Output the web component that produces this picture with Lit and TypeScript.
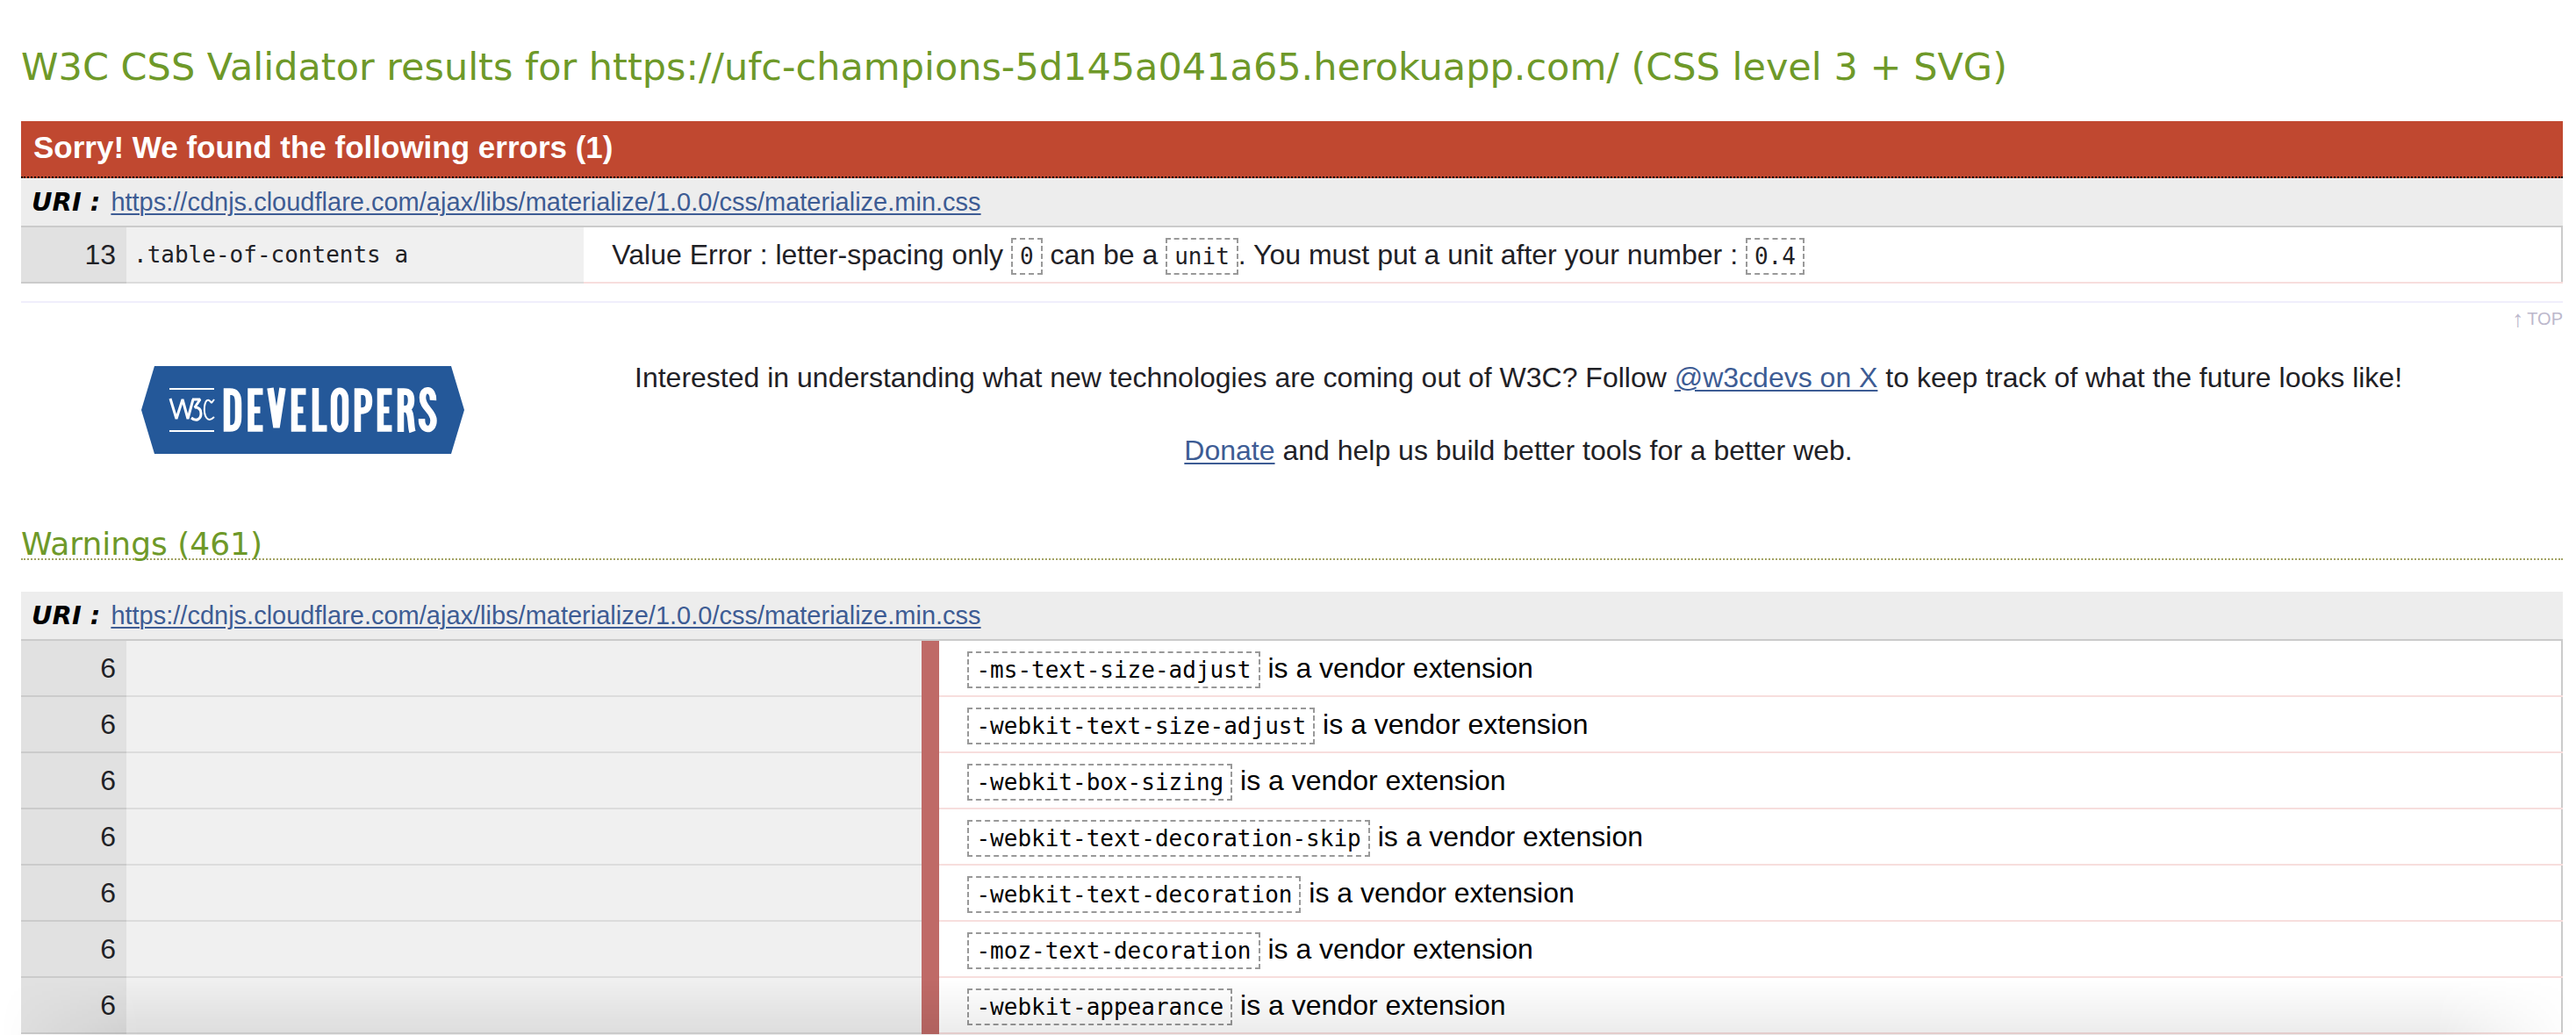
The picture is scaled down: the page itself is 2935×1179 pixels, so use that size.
import { LitElement, html, css } from "lit";
import { customElement } from "lit/decorators.js";

const SHEET = "https://cdnjs.cloudflare.com/ajax/libs/materialize/1.0.0/css/materialize.min.css";

const WARNINGS = [
  "-ms-text-size-adjust",
  "-webkit-text-size-adjust",
  "-webkit-box-sizing",
  "-webkit-text-decoration-skip",
  "-webkit-text-decoration",
  "-moz-text-decoration",
  "-webkit-appearance",
];

@customElement("w3c-developers-logo")
class W3cDevelopersLogo extends LitElement {
  static styles = css`
    :host { display: block; }
    .logo { display: block; width: 368px; height: 100px; }
  `;
  render() {
    return html`
      <svg class="logo" viewBox="0 0 368 100" role="img" aria-label="W3C Developers">
        <path d="M15 0H353L368 50L353 100H15L0 50Z" fill="#245899" />
        <path d="M32 26H83M32 74H83" stroke="#fff" stroke-width="2" />
        <g fill="none" stroke="#fff" stroke-width="3" stroke-linejoin="bevel">
          <path d="M33 37L40 60L47 38L53 60L59 38" stroke-width="3" />
          <path d="M58 38H67L61 47C67 47 68 51 68 54C68 60 63 64 57 59" />
          <path d="M83 38L80 42C76 36 73 39 72 46C71 56 75 66 83 58" stroke-width="2" />
        </g>
        <g fill="none" stroke="#fff" stroke-width="7.5">
          <path d="M97.500 29H101C108 29 110.500 33 110.500 42V58C110.500 67 108 71 101 71H97.500Z" />
          <path d="M138.500 29H125V71H138.500M125 50H135.500" />
          <path d="M147 25L154 70L161 25" />
          <path d="M187.500 29H174.500V71H187.500M174.500 50H184.500" />
          <path d="M198.500 25V71H211.500" />
          <path d="M219.500 38C219.500 25 232.500 25 232.500 38V62C232.500 75 219.500 75 219.500 62Z" />
          <path d="M246.500 75V29H250C258 29 259.500 33 259.500 40C259.500 48 257 51 250 51H246.500" />
          <path d="M285.500 29H272.500V71H285.500M272.500 50H282.500" />
          <path d="M295.500 75V29H299C306 29 307.500 33 307.500 39C307.500 46 305 49 299 49H295.500M301 49C309 50 306 66 309 75" />
          <path d="M332.500 39C333 25 320.500 24 320.500 36C320.500 48 333 51 333 62C333 75 319 75 319.500 60" />
        </g>
      </svg>
    `;
  }
}

@customElement("app-root")
class AppRoot extends LitElement {
  static styles = css`
    :host {
      display: block;
      height: 100vh;
      overflow: hidden;
      background: #fff;
      color: #1f2126;
      font-family: "Liberation Sans", Arial, sans-serif;
      font-size: 32px;
      line-height: 48px;
    }
    * { box-sizing: border-box; }
    .page { padding: 48px 15px 0 24px; }
    h2, h3, h4, p { margin: 0; }
    a { color: #3d5c94; text-underline-offset: 3px; text-decoration-thickness: 2px; }
    .title {
      margin-bottom: 34px;
      color: #6e9929;
      font: 43px/56px "DejaVu Sans", Verdana, sans-serif;
    }
    .banner {
      height: 65px;
      padding: 0 14px;
      border-bottom: 2px dotted #000;
      background: #c04830;
      color: #fff;
      font-size: 35px;
      font-weight: 700;
      line-height: 60px;
    }
    .uri {
      display: flex;
      align-items: center;
      gap: 12px;
      height: 54px;
      padding: 0 12px;
      background: #ededed;
      font-size: 29px;
      font-weight: 400;
    }
    .uri-label { color: #000; font: italic 700 29px/48px "DejaVu Sans", Verdana, sans-serif; }
    table {
      width: 100%;
      border-spacing: 0;
      border-top: 2px solid #cbcbcb;
      table-layout: fixed;
    }
    td {
      height: 64px;
      padding: 0;
      border-bottom: 2px solid #f7dedd;
      vertical-align: middle;
      white-space: nowrap;
    }
    .line { width: 120px; padding-right: 12px; border-color: #cbcbcb; background: #e1e1e1; text-align: right; }
    .context { border-color: #dcdcdc; background: #f0f0f0; font: 26px/32px "DejaVu Sans Mono", monospace; padding-left: 8px; }
    .errors .context { width: 18%; }
    .errors .message { padding-left: 32px; }
    .warnings .context { width: 31.3%; }
    .bar { width: 20px; background: #bf6a67; border-color: #bf6a67; }
    .warnings .message { padding-left: 32px; color: #000; }
    .message-edge { width: 2px; background: #cbcbcb; }
    code {
      display: inline-block;
      padding: 0 8px;
      border: 2px dashed #999;
      color: #000;
      font: 26px/38px "DejaVu Sans Mono", monospace;
    }
    .errors code { color: #1f2126; }
    .top {
      margin-top: 20px;
      padding-top: 6px;
      border-top: 2px solid #f0eefc;
      font-size: 20px;
      line-height: 24px;
      text-align: right;
    }
    .top a {
      display: flex;
      justify-content: flex-end;
      align-items: center;
      gap: 4px;
      color: #bcb8cc;
      text-decoration: none;
    }
    .arrow { font-size: 26px; }
    .promo { display: flex; align-items: flex-start; padding-top: 31px; }
    .promo-logo { width: 23%; padding: 11px 0 0 137px; flex: none; }
    .promo-text { flex: 1; padding-right: 150px; text-align: center; }
    .promo-text p + p { margin-top: 35px; }
    .warnings-title {
      margin: 67px 0 36px;
      border-bottom: 2px dotted #a3a365;
      color: #6e9929;
      font: 36px/32px "DejaVu Sans", Verdana, sans-serif;
    }
    .shade {
      position: fixed;
      right: 0;
      bottom: 0;
      left: 0;
      height: 64px;
      background: linear-gradient(to bottom, transparent, rgba(0, 0, 0, 0.08));
      mask-image: linear-gradient(to right, transparent, #000 160px, #000 calc(100% - 160px), transparent);
      pointer-events: none;
    }
  `;

  private uri() {
    return html`<h4 class="uri"><span class="uri-label">URI :</span><a href=${SHEET}>${SHEET}</a></h4>`;
  }

  render() {
    return html`
      <main class="page" id="top">
        <h2 class="title">W3C CSS Validator results for https://ufc-champions-5d145a041a65.herokuapp.com/ (CSS level 3 + SVG)</h2>
        <section class="errors">
          <h3 class="banner">Sorry! We found the following errors (1)</h3>
          ${this.uri()}
          <table>
            <tr>
              <td class="line">13</td>
              <td class="context">.table-of-contents a</td>
              <td class="message">Value Error : letter-spacing only <code>0</code> can be a <code>unit</code>. You must put a unit after your number : <code>0.4</code></td>
              <td class="message-edge"></td>
            </tr>
          </table>
        </section>
        <p class="top"><a href="#top"><span class="arrow">↑</span> TOP</a></p>
        <section class="promo">
          <div class="promo-logo"><w3c-developers-logo></w3c-developers-logo></div>
          <div class="promo-text">
            <p>Interested in understanding what new technologies are coming out of W3C? Follow <a href="#w3cdevs">@w3cdevs on X</a> to keep track of what the future looks like!</p>
            <p><a href="#donate">Donate</a> and help us build better tools for a better web.</p>
          </div>
        </section>
        <section class="warnings">
          <h3 class="warnings-title">Warnings (461)</h3>
          ${this.uri()}
          <table>
            ${WARNINGS.map((name) => html`
              <tr>
                <td class="line">6</td>
                <td class="context"></td>
                <td class="bar"></td>
                <td class="message"><code>${name}</code> is a vendor extension</td>
                <td class="message-edge"></td>
              </tr>
            `)}
          </table>
        </section>
      </main>
      <div class="shade"></div>
    `;
  }
}
